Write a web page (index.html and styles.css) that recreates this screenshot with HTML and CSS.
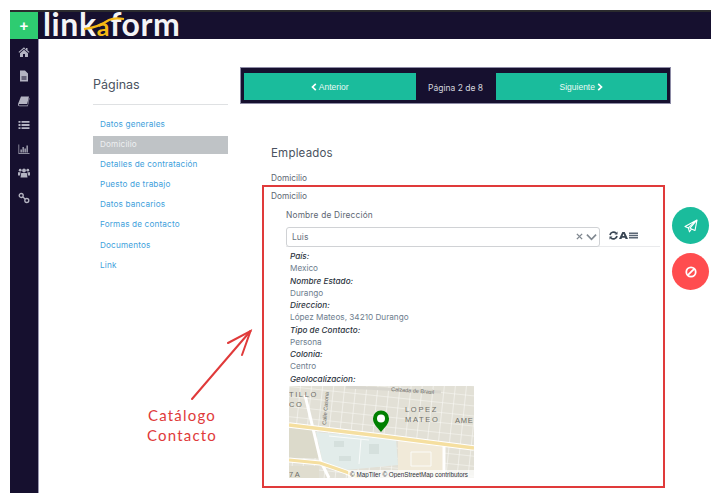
FILE: index.html
```html
<!DOCTYPE html>
<html lang="es">
<head>
<meta charset="utf-8">
<title>Linkaform</title>
<link rel="stylesheet" href="styles.css">
</head>
<body>
<div class="frame">
  <header class="topbar">
    <div class="add">+</div>
    <div class="logo"><span>link</span><span class="logo-a">a</span><span>form</span>
      <svg class="swoosh" width="42" height="24" viewBox="0 0 42 24"><path d="M1 14C12 13 20 9 26 5 30 3 35 3 41 4" fill="none" stroke="#f5b914" stroke-width="2.200"/></svg>
    </div>
  </header>
  <div class="body">
    <nav class="rail">
      <svg class="ic" viewBox="0 0 12 12"><path d="M6 1.200 0.500 6l.7.800L6 2.700l4.800 4.100.7-.8-2-1.700V2H8v1.400zM2 7.200V11h3V8h2v3h3V7.200L6 3.800z"/></svg>
      <svg class="ic" viewBox="0 0 12 12"><path d="M2 .5h5l3 3V11.500H2zM3.500 6.500v1h5v-1zm0 2v1h5v-1z" fill-rule="evenodd"/></svg>
      <svg class="ic" viewBox="0 0 12 12"><path d="M3 1.500h8L9.200 9H1.500C.6 9 .6 10.500 1.500 10.500h8l.3-1L11 3l.5.500L9.800 11.200H1.500C-.4 11.200-.2 8.800.6 7.500z"/></svg>
      <svg class="ic" viewBox="0 0 12 12"><path d="M.5 2h2v1.800h-2zM3.500 2h8v1.800h-8zM.5 5.100h2v1.800h-2zM3.500 5.100h8v1.800h-8zM.5 8.200h2V10h-2zM3.500 8.200h8V10h-8z"/></svg>
      <svg class="ic" viewBox="0 0 12 12"><path d="M.5 1.500h.7v8.800h10.300v.7H.5zM2.500 6.500h1.300v3H2.500zM4.500 4h1.300v5.500H4.500zM6.500 5.500h1.300v4H6.500zM8.500 2.500h1.300v7H8.500z"/></svg>
      <svg class="ic" viewBox="0 0 12 12"><circle cx="6" cy="3.500" r="1.900"/><circle cx="2.200" cy="3.200" r="1.400"/><circle cx="9.800" cy="3.200" r="1.400"/><path d="M3.200 6h5.600l.7 4.500h-7zM0 5.200h2.600L2 8.500H0zM9.400 5.200H12v3.300h-2z"/></svg>
      <svg class="ic" viewBox="0 0 12 12"><g fill="none" stroke="#b4b4c2" stroke-width="1.300"><circle cx="3.200" cy="3.500" r="2"/><circle cx="8.800" cy="8.500" r="2"/><path d="M4.800 5l2.400 2"/></g></svg>
    </nav>
    <main class="content">
      <aside class="pages">
        <h2 class="pages-title">Páginas</h2>
        <ul class="pages-list">
          <li>Datos generales</li>
          <li class="active">Domicilio</li>
          <li>Detalles de contratación</li>
          <li>Puesto de trabajo</li>
          <li>Datos bancarios</li>
          <li>Formas de contacto</li>
          <li>Documentos</li>
          <li>Link</li>
        </ul>
      </aside>
      <section class="form">
        <div class="pager">
          <div class="pager-btn"><svg class="chev" viewBox="0 0 6 8"><path d="M4.800.8 1.500 4l3.300 3.200" fill="none" stroke="#fff" stroke-width="1.700"/></svg>Anterior</div>
          <div class="pager-label">Página 2 de 8</div>
          <div class="pager-btn">Siguiente<svg class="chev" viewBox="0 0 6 8"><path d="M1.200.8 4.500 4 1.200 7.200" fill="none" stroke="#fff" stroke-width="1.700"/></svg></div>
        </div>
        <h3 class="form-title">Empleados</h3>
        <div class="group-label">Domicilio</div>
        <div class="group">
          <div class="group-head">Domicilio</div>
          <div class="field-label">Nombre de Dirección</div>
          <div class="select-row">
            <div class="select">
              <span class="select-value">Luis</span>
              <svg class="select-x" viewBox="0 0 8 8"><path d="M1 1l6 6M7 1 1 7" stroke="#808890" stroke-width="1.600"/></svg>
              <svg class="select-arrow" viewBox="0 0 12 8"><path d="M1 1.500 6 6.500l5-5" fill="none" stroke="#808890" stroke-width="1.800"/></svg>
            </div>
            <div class="tools">
              <svg class="tool" viewBox="0 0 9 9"><path d="M1 4A3.500 3.500 0 0 1 7 2.200M8 5A3.500 3.500 0 0 1 2 6.800" fill="none" stroke="#3a4654" stroke-width="1.700"/><path d="M8.500.5v3h-3zM.5 8.500v-3h3z" fill="#3a4654"/></svg>
              <svg class="tool" viewBox="0 0 9 9"><path d="M3.300 1h2.400L9 8H6.500L6 6.700H3L2.500 8H0zM3.600 5h1.800l-.9-2.300z" fill="#3a4654" fill-rule="evenodd"/></svg>
              <svg class="tool" viewBox="0 0 9 9"><path d="M0 1.500h9v1.600H0zM0 3.700h9v1.600H0zM0 5.900h9v1.600H0z" fill="#5a6674"/></svg>
            </div>
          </div>
          <dl class="details">
            <dt>País:</dt><dd>Mexico</dd>
            <dt>Nombre Estado:</dt><dd>Durango</dd>
            <dt>Direccion:</dt><dd>López Mateos, 34210 Durango</dd>
            <dt>Tipo de Contacto:</dt><dd>Persona</dd>
            <dt>Colonia:</dt><dd>Centro</dd>
            <dt>Geolocalizacion:</dt>
          </dl>
          <svg class="map" width="185" height="92" viewBox="0 0 185 92">
            <defs>
              <pattern id="blocks" width="11" height="10" patternUnits="userSpaceOnUse" patternTransform="rotate(6)">
                <rect width="11" height="10" fill="#e2e0d6"/>
                <path d="M0 0H11M0 0V10" stroke="#fafaf6" stroke-width="1.200"/>
              </pattern>
            </defs>
            <rect width="185" height="92" fill="url(#blocks)"/>
            <path d="M0 42 25 44 31 72 0 72z" fill="#dcdacb"/>
            <path d="M27 46 107 54 109 79 57 84 34 78z" fill="#e2ecea"/>
            <path d="M45 55h10v6H45zM80 58h10v10H80zM50 70h12v5H50z" fill="#d5e0dd"/>
            <path d="M40 50 80 54M72 53 70 78" stroke="#fafcfb" stroke-width="1"/>
            <path d="M109 54 154 61V92H109z" fill="#f1ead9"/>
            <path d="M122 66h20v14h-20z" fill="none" stroke="#fbfbf8"/>
            <path d="M0 80H30V92H0z" fill="#e0ddcf"/>
            <path d="M16 9 32 76 40 92" fill="none" stroke="#fff" stroke-width="3"/>
            <path d="M155 60V92" stroke="#fff" stroke-width="3"/>
            <path d="M0 39C60 46 125 54 185 62" fill="none" stroke="#fff" stroke-width="5.500"/>
            <path d="M0 39C60 46 125 54 185 62" fill="none" stroke="#f5dfa0" stroke-width="3.500"/>
            <path d="M0 74 31 77 57 86 70 92" fill="none" stroke="#fff" stroke-width="5"/>
            <path d="M0 74 31 77 57 86 70 92" fill="none" stroke="#f5dfa0" stroke-width="3"/>
            <path d="M57 1 152 6" stroke="#d8d6ce" stroke-width="3"/>
            <g class="map-label">
              <text x="0" y="11" letter-spacing="1.600">TILLO</text>
              <text x="0" y="21" letter-spacing="1.600">CO</text>
              <text x="116" y="26" letter-spacing="1.700">LOPEZ</text>
              <text x="116" y="36" letter-spacing="1.700">MATEO</text>
              <text x="166" y="37" letter-spacing=".8">AME</text>
              <text x="0" y="91">7 A</text>
            </g>
            <text class="map-street" x="102" y="5" transform="rotate(4 102 5)">Calzada de Brasil</text>
            <text class="map-street" x="37" y="39" transform="rotate(-85 37 39)">Calle Casona</text>
            <path d="M92 46C88 41 84 38 84 32.500a8 8 0 0 1 16 0C100 38 96 41 92 46z" fill="#008000"/>
            <circle cx="92" cy="32.500" r="4" fill="#fff"/>
            <rect x="59" y="84" width="126" height="8" fill="#fff" fill-opacity=".7"/>
            <text class="map-credit" x="61" y="90.500">© MapTiler © OpenStreetMap contributors</text>
          </svg>
        </div>
      </section>
    </main>
  </div>
</div>
<button class="fab fab-send" type="button"><svg width="14" height="14" viewBox="0 0 14 14"><g fill="none" stroke="#fff" stroke-width="1.100" stroke-linejoin="round"><path d="M13 1 1 7.500l3.300 1.400L13 1 11 11.500 7.500 10 5.500 12.800 4.300 8.900"/><path d="M13 1 6 9.200l1.500.8"/></g></svg></button>
<button class="fab fab-cancel" type="button"><svg width="12" height="12" viewBox="0 0 12 12"><g fill="none" stroke="#fff" stroke-width="1.800"><circle cx="6" cy="6" r="4.700"/><path d="M2.800 9.200 9.200 2.800"/></g></svg></button>
<svg class="arrow" width="70" height="80" viewBox="0 0 70 80"><g fill="none" stroke="#e03a3a" stroke-width="2" stroke-linecap="round"><path d="M2 78 60.500 10"/><path d="M38 22 60.500 10 52 34"/></g></svg>
<div class="note">Catálogo<br>Contacto</div>
</body>
</html>
```
FILE: styles.css
```css
* { box-sizing: border-box; }
html, body { margin: 0; padding: 0; background: #fff; }
body { position: relative; width: 721px; height: 503px; overflow: hidden; font-family: Inter, "Noto Sans", sans-serif; }

.frame { margin: 10px 0 0 10px; width: 701px; height: 483px; display: flex; flex-direction: column; }

.topbar { height: 29px; flex: none; display: flex; background: #16102f; border-top: 2px solid #2b2b2e; }
.add { width: 28px; background: #2ecc71; color: #fff; font: 700 15px/27px "Liberation Sans", sans-serif; text-align: center; }
.logo { position: relative; margin-left: 5px; color: #f4f4f6; font: 700 32px/24px Lato, sans-serif; letter-spacing: .6px; white-space: nowrap; }
.logo-a { color: #f5b914; font-size: 25px; }
.swoosh { position: absolute; left: 40px; top: 3px; }

.body { flex: 1; display: flex; min-height: 0; }
.rail { width: 29px; flex: none; background: #16102f; border-right: 1px solid #9a98b0; display: flex; flex-direction: column; align-items: center; padding: 7px 1px 0 0; gap: 12.300px; }
.ic { width: 12px; height: 12px; fill: #b4b4c2; flex: none; }

.content { flex: 1; display: flex; position: relative; }
.pages { width: 135px; margin-left: 54px; flex: none; }
.pages-title { margin: 0; padding: 36px 0 9px; font: 400 12.500px/20px Inter, sans-serif; color: #4a5260; border-bottom: 1px solid #dfe1e3; height: 66px; }
.pages-list { list-style: none; margin: 10.500px 0 0; padding: 0; display: flex; flex-direction: column; gap: 2.200px; }
.pages-list li { height: 18px; padding-left: 7px; font-size: 8.200px; line-height: 17px; letter-spacing: .15px; color: #3f9fdc; }
.pages-list .active { background: #bfc3c6; color: #eef0f1; }

.form { width: 431px; margin-left: 12px; flex: none; }
.pager { margin-top: 28px; height: 37px; display: flex; padding: 5px 3px 3px; background: #16102f; border: 1px solid #8e8ca6; }
.pager-btn { flex: 1; padding-top: 1px; background: #1abc9c; color: #eafaf6; font: 400 8.500px/27px "Liberation Sans", sans-serif; display: flex; align-items: center; justify-content: center; gap: 2px; }
.chev { width: 6px; height: 8px; flex: none; }
.pager-label { width: 80px; flex: none; text-align: center; color: #d5d6de; font-size: 8.500px; line-height: 30px; }

.form-title { margin: 39px 0 0 31px; font: 400 11.500px/20px Inter, sans-serif; color: #4a5260; letter-spacing: .2px; }
.group-label { margin: 9px 0 0 31px; font-size: 8.300px; line-height: 12px; color: #5d6672; }

.group { margin: 1px 0 0 22px; width: 403px; height: 303px; border: 2px solid #e03a3a; padding: 3px 0 0 7px; }
.group-head { font-size: 8.300px; line-height: 12px; color: #5d6672; }
.field-label { margin: 7px 0 0 15px; font-size: 8.300px; line-height: 12px; color: #5d6672; letter-spacing: .2px; }

.select-row { margin: 6px 3px 0 15px; height: 20px; display: flex; align-items: center; border-bottom: 1px solid #e9eaec; }
.select { width: 314px; height: 20px; flex: none; display: flex; align-items: center; background: #fff; border: 1px solid #d0d2d5; border-radius: 3px; padding: 0 2px 0 5px; }
.select-value { flex: 1; font-size: 8.500px; color: #6a7480; }
.select-x { width: 7px; height: 7px; margin-right: 3px; }
.select-arrow { width: 11px; height: 8px; }
.tools { margin-left: 9px; display: flex; gap: 1px; padding-bottom: 3px; }
.tool { width: 9px; height: 9px; }

.details { margin: 3px 0 0 19px; padding: 0; }
.details dt, .details dd { margin: 0; height: 12.250px; font-size: 8.200px; line-height: 12.250px; }
.details dt { font-style: italic; font-weight: 500; color: #2c3440; }
.details dd { color: #6d7d8e; }

.map { display: block; margin: 1px 0 0 18px; }
.map-label { font: 400 7.500px "Liberation Sans", sans-serif; fill: #6e6e68; }
.map-street { font: 400 5.500px "Liberation Sans", sans-serif; fill: #6e6e68; }
.map-credit { font: 400 6.300px "Liberation Sans", sans-serif; fill: #2c3138; }

.fab { position: absolute; left: 672px; width: 37px; height: 37px; padding: 0; border: 0; border-radius: 50%; display: flex; align-items: center; justify-content: center; }
.fab-send { top: 207px; background: #1abc9c; }
.fab-cancel { top: 253px; background: #ff4d4f; }

.arrow { position: absolute; left: 190px; top: 321px; }
.note { position: absolute; left: 144px; top: 405px; width: 76px; text-align: center; font: 400 15px/20px Lato, sans-serif; letter-spacing: 1.200px; color: #e03a3a; }
```
